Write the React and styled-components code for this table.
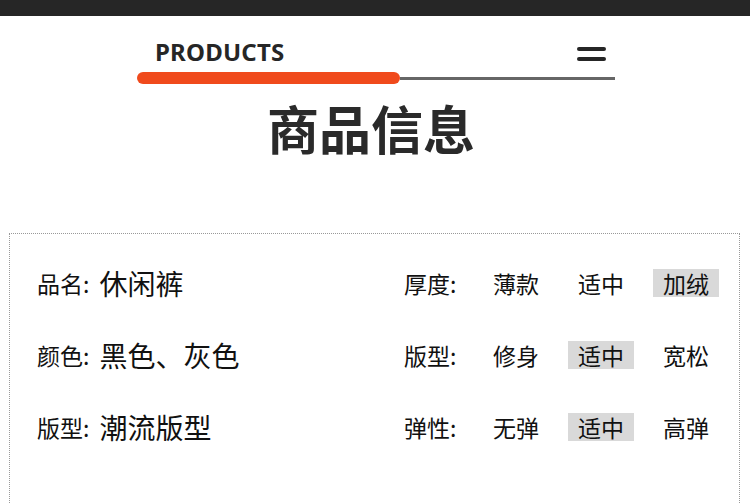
import React from "react";
import styled, { createGlobalStyle } from "styled-components";

const GlobalStyle = createGlobalStyle`
  body {
    margin: 0;
    background: #fff;
    font-family: "Noto Sans CJK SC", "Noto Sans", sans-serif;
    color: #111;
  }
`;

const Page = styled.div`
  width: 750px;
  height: 504px;
  overflow: hidden;
  background: #fff;
`;

const TopBar = styled.div`
  height: 16px;
  background: #262626;
`;

const Header = styled.div`
  width: 478px;
  margin: 0 auto;
  padding-top: 17px;
  transform: translateX(1px);
`;

const HeaderRow = styled.div`
  display: flex;
  align-items: center;
  justify-content: space-between;
  padding: 0 9px 0 18px;
  height: 36px;
`;

const Brand = styled.div`
  font-family: "Noto Sans", "Open Sans", sans-serif;
  font-weight: 700;
  font-size: 24px;
  letter-spacing: 0.2px;
  color: #262626;
`;

const Menu = styled.div`
  display: flex;
  flex-direction: column;
  gap: 6px;
  margin-top: 6px;

  span {
    display: block;
    width: 29px;
    height: 4px;
    border-radius: 2px;
    background: #262626;
  }
`;

const Track = styled.div`
  display: flex;
  align-items: center;
  margin-top: 3px;
  height: 12px;
`;

const Fill = styled.div`
  width: 263px;
  height: 12px;
  border-radius: 6px;
  background: #f04a1c;
`;

const Rest = styled.div`
  flex: 1;
  height: 3px;
  background: #666;
`;

const Title = styled.h1`
  margin: 14px 0 0;
  text-align: center;
  font-size: 52px;
  font-weight: 700;
  line-height: 60px;
  color: #2a2a2a;
  transform: translateX(-4px);
`;

const Box = styled.div`
  margin: 75px 10px 0 9px;
  height: 300px;
  border: 1px dotted #999;
  border-bottom: none;
  display: grid;
  grid-template-columns: 367px 1fr;
  padding: 13px 0 0 27px;
`;

const Column = styled.div`
  display: flex;
  flex-direction: column;
`;

const Row = styled.div`
  height: 72px;
  display: flex;
  align-items: center;
`;

const Label = styled.span`
  font-size: 23px;
  color: #111;
`;

const Value = styled.span`
  font-size: 28px;
  color: #111;
  margin-left: 10px;
`;

const OptionLabel = styled.span`
  width: 79px;
  font-size: 23px;
  color: #111;
`;

const Chip = styled.span`
  width: ${(p) => (p.$last ? "auto" : "85px")};
  display: flex;
`;

const ChipText = styled.span`
  padding: 0 10px;
  height: 28px;
  line-height: 28px;
  font-size: 23px;
  color: #111;
  background: ${(p) => (p.$on ? "#d9d9d9" : "transparent")};
`;

const info = [
  ["品名:", "休闲裤"],
  ["颜色:", "黑色、灰色"],
  ["版型:", "潮流版型"],
];

const options = [
  ["厚度:", ["薄款", "适中", "加绒"], 2],
  ["版型:", ["修身", "适中", "宽松"], 1],
  ["弹性:", ["无弹", "适中", "高弹"], 1],
];

export default function App() {
  return (
    <Page>
      <GlobalStyle />
      <TopBar />
      <Header>
        <HeaderRow>
          <Brand>PRODUCTS</Brand>
          <Menu>
            <span />
            <span />
          </Menu>
        </HeaderRow>
        <Track>
          <Fill />
          <Rest />
        </Track>
      </Header>
      <Title>商品信息</Title>
      <Box>
        <Column>
          {info.map(([k, v]) => (
            <Row key={k}>
              <Label>{k}</Label>
              <Value>{v}</Value>
            </Row>
          ))}
        </Column>
        <Column>
          {options.map(([k, list, on]) => (
            <Row key={k}>
              <OptionLabel>{k}</OptionLabel>
              {list.map((o, i) => (
                <Chip key={o} $last={i === list.length - 1}>
                  <ChipText $on={i === on}>{o}</ChipText>
                </Chip>
              ))}
            </Row>
          ))}
        </Column>
      </Box>
    </Page>
  );
}
